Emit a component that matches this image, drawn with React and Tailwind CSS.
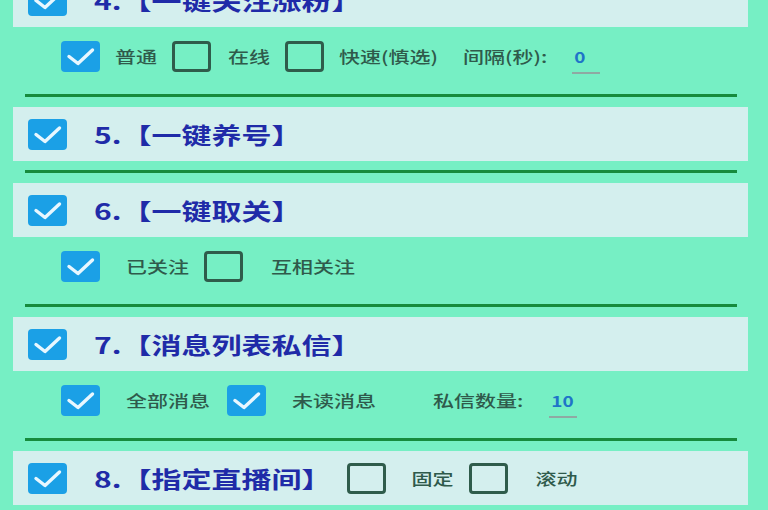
import React from 'react'

const font = { fontFamily: '"Noto Sans CJK SC", "Noto Sans", sans-serif' }

function Check({ on, className = '' }) {
  if (!on) {
    return <div className={`w-[39px] h-[31px] shrink-0 rounded-[4px] border-[3px] border-[#2f5c4b] ${className}`} />
  }
  return (
    <div className={`w-[39px] h-[31px] shrink-0 rounded-[4px] bg-[#1ba0e6] flex items-center justify-center ${className}`}>
      <svg width="39" height="31" viewBox="0 0 39 31">
        <path d="M8 15.5 L17 22.5 L31.5 9" fill="none" stroke="#e8f7ff" strokeWidth="3.4" strokeLinecap="round" strokeLinejoin="round" />
      </svg>
    </div>
  )
}

function Label({ children, className = '' }) {
  return (
    <span className={`inline-block text-[21px] leading-none font-medium text-[#2f5a4b] scale-y-[0.76] whitespace-nowrap ${className}`}>
      {children}
    </span>
  )
}

// underlined number field
function Value({ children, className = '' }) {
  return (
    <span className={`inline-flex flex-col items-start w-[28px] ${className}`}>
      <span className="inline-block pl-[2px] text-[19px] leading-none font-bold text-[#1f74c8] scale-y-[0.8]">{children}</span>
      <span className="block h-[2px] w-[28px] bg-[#8fa9a3] mt-[6px]" />
    </span>
  )
}

function Header({ title, children }) {
  return (
    <div className="ml-[13px] w-[735px] h-[54px] bg-[#d4efee] flex items-center pl-[15px]">
      <Check on />
      <span className="ml-[27px] inline-block text-[30px] leading-none font-bold text-[#1f2ba8] scale-y-[0.74] whitespace-nowrap">{title}</span>
      {children}
    </div>
  )
}

function Divider() {
  return <div className="ml-[25px] w-[712px] h-[3px] bg-[#168b3d] mt-[9px] mb-[10px]" />
}

function Sub({ children }) {
  return <div className="h-[58px] flex items-center pl-[61px]">{children}</div>
}

export default function App() {
  return (
    <div className="w-[768px] h-[510px] overflow-hidden bg-[#76efc4]" style={font}>
      <div className="-mt-[27px]">
        <Header title="4.【一键关注涨粉】" />
        <Sub>
          <Check on />
          <Label className="ml-[15px]">普通</Label>
          <Check className="ml-[15px]" />
          <Label className="ml-[17px]">在线</Label>
          <Check className="ml-[15px]" />
          <Label className="ml-[15px]">快速(慎选)</Label>
          <Label className="ml-[25px]">间隔(秒):</Label>
          <Value className="ml-[25px] mt-[8px]">0</Value>
        </Sub>
        <Divider />

        <Header title="5.【一键养号】" />
        <Divider />

        <Header title="6.【一键取关】" />
        <Sub>
          <Check on />
          <Label className="ml-[26px]">已关注</Label>
          <Check className="ml-[15px]" />
          <Label className="ml-[28px]">互相关注</Label>
        </Sub>
        <Divider />

        <Header title="7.【消息列表私信】" />
        <Sub>
          <Check on />
          <Label className="ml-[26px]">全部消息</Label>
          <Check on className="ml-[17px]" />
          <Label className="ml-[26px]">未读消息</Label>
          <Label className="ml-[57px]">私信数量:</Label>
          <Value className="ml-[26px] mt-[8px]">10</Value>
        </Sub>
        <Divider />

        <Header title="8.【指定直播间】">
          <Check className="ml-[16px]" />
          <Label className="ml-[25px]">固定</Label>
          <Check className="ml-[16px]" />
          <Label className="ml-[27px]">滚动</Label>
        </Header>
      </div>
    </div>
  )
}
